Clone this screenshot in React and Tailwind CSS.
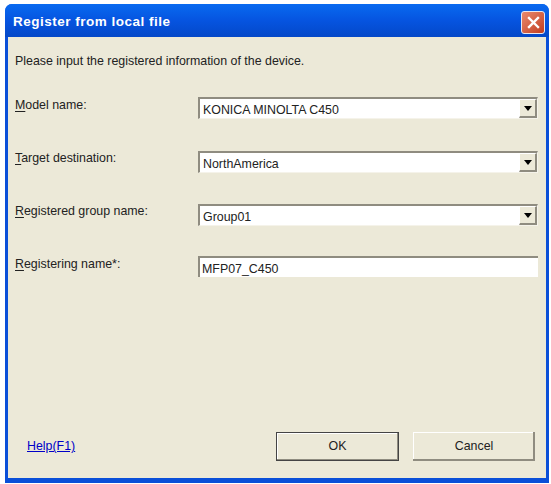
import React from 'react';

const Combo = ({ value }) => (
  <div className="flex h-[22px] w-[340px] border-t-2 border-l-2 border-t-[#8f8c80] border-l-[#8f8c80] bg-white border-b border-r border-b-[#f5f3ea] border-r-[#f5f3ea]">
    <span className="flex-1 pl-[3px] pt-[4px] text-[12.4px] leading-[15px] text-[#222]">{value}</span>
    <div className="flex h-[19px] w-[18px] items-center justify-center bg-[#ece9d8] border-r-2 border-b-2 border-r-[#8f8c80] border-b-[#8f8c80] border-t border-l border-t-white border-l-white">
      <svg width="8" height="5" viewBox="0 0 8 5"><path d="M0 0h8L4 5z" fill="#000" /></svg>
    </div>
  </div>
);

const Row = ({ mark, rest, value, top, labelTop, children }) => (
  <div className={`flex items-start ${top}`}>
    <div className={`w-[183px] shrink-0 text-[12.4px] leading-[14px] text-[#222] ${labelTop}`}>
      <span className="underline underline-offset-2">{mark}</span>{rest}
    </div>
    {children || <Combo value={value} />}
  </div>
);

const App = () => {
  return (
    <div className="h-[484px] w-[551px] bg-white pt-[4px] pl-[5px] pr-[2px] pb-[1px]" style={{ fontFamily: '"Liberation Sans", Arial, sans-serif' }}>
      <div className="flex h-full flex-col overflow-hidden rounded-t-[7px] bg-[#0a4fd8]">
        {/* title bar */}
        <div className="flex h-[33px] shrink-0 items-center justify-between bg-gradient-to-b from-[#0a6af0] via-[#0654e0] to-[#0448c8] pl-[8px] pr-[4px] pt-[3px]">
          <span className="text-[13.5px] font-bold tracking-[0.5px] text-white">Register from local file</span>
          <div className="flex h-[23px] w-[24px] items-center justify-center rounded-[3px] border border-[#e8e8f0] bg-gradient-to-br from-[#e88a6e] to-[#c23a1c]">
            <svg width="13" height="13" viewBox="0 0 13 13"><path d="M2 2l9 9M11 2l-9 9" stroke="#fff" strokeWidth="2.4" strokeLinecap="square" /></svg>
          </div>
        </div>
        {/* body */}
        <div className="mx-[3px] mb-[5px] flex flex-1 flex-col bg-[#ece9d8] pl-[7px]">
          <p className="mt-[17px] text-[12.4px] leading-[14px] text-[#222]">Please input the registered information of the device.</p>
          <Row mark="M" rest="odel name:" value="KONICA MINOLTA C450" top="mt-[29px]" labelTop="pt-[1px]" />
          <Row mark="T" rest="arget destination:" value="NorthAmerica" top="mt-[32px]" labelTop="" />
          <Row mark="R" rest="egistered group name:" value="Group01" top="mt-[31px]" labelTop="" />
          <Row mark="R" rest="egistering name*:" top="mt-[30px]" labelTop="pt-[1px]">
            <div className="h-[21px] w-[340px] border-t-2 border-l-2 border-t-[#8f8c80] border-l-[#8f8c80] bg-white pl-[2px] pt-[4px] text-[12.4px] leading-[15px] text-[#222]">MFP07_C450</div>
          </Row>
          <div className="mt-auto mb-[17px] flex items-center justify-between pr-[11px]">
            <a className="ml-[12px] text-[12.4px] text-[#0000c8] underline">Help(F1)</a>
            <div className="flex gap-[14px]">
              <button className="h-[29px] w-[123px] border border-[#444] bg-[#ece9d8] text-[12.4px] text-[#222] shadow-[inset_-1px_-1px_0_#8f8c80,inset_1px_1px_0_#fff]">OK</button>
              <button className="h-[29px] w-[122px] bg-[#ece9d8] text-[12.4px] text-[#222] shadow-[inset_-2px_-2px_0_#8f8c80,inset_1px_1px_0_#fff]">Cancel</button>
            </div>
          </div>
        </div>
      </div>
    </div>
  );
};

export default App;
